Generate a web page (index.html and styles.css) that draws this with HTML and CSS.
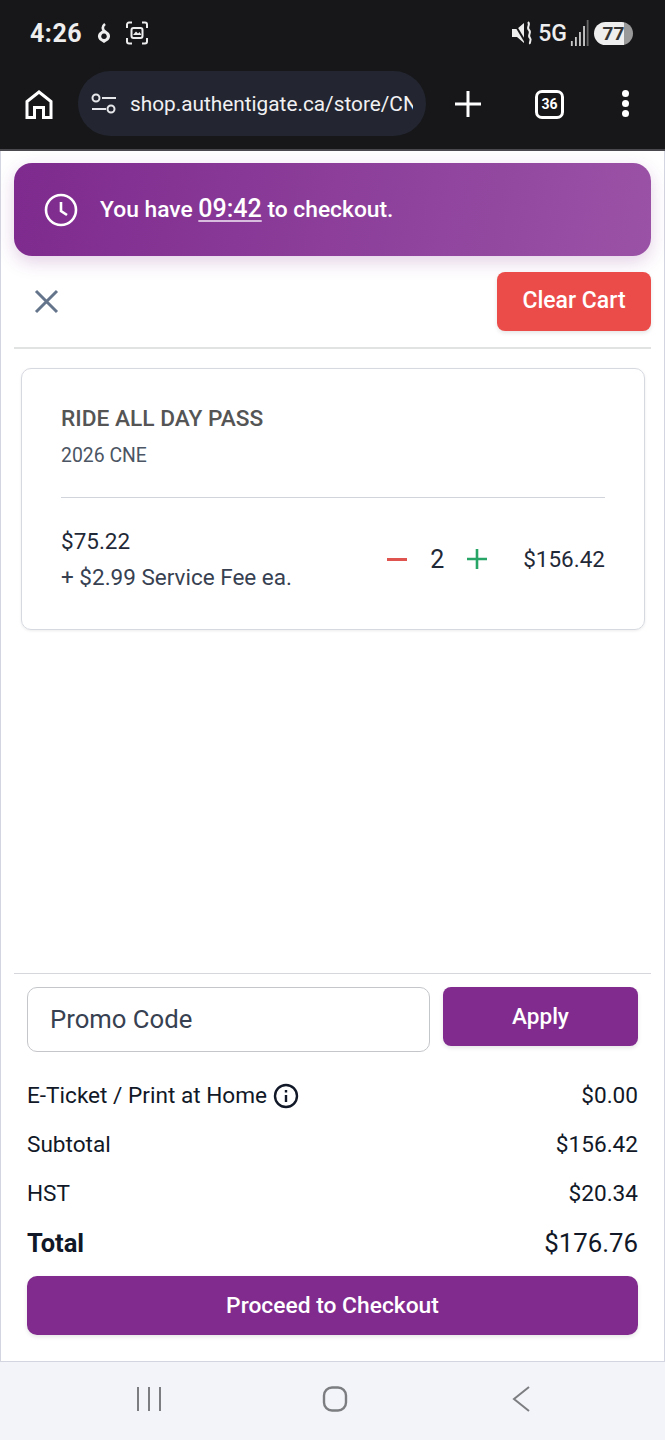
FILE: index.html
```html
<!DOCTYPE html>
<html lang="en">

<head>
    <meta charset="UTF-8" />
    <title>Cart</title>
    <meta name="viewport" content="width=device-width, initial-scale=1" />
    <link rel="stylesheet" href="styles.css">
</head>

<body>
    <div class="status-bar">
        <div class="status-left">
            <span class="clock">4:26</span>
            <svg class="ic-drop" width="14" height="20" viewBox="0 0 14 20"><path d="M8 1 C5.500 3 5 4.500 6.500 7" fill="none" stroke="#eee" stroke-width="2.600"/><path d="M7 6 L12 10 C13.500 12 13.500 15 11.500 17 L7 20 L2.500 17 C0.500 15 0.500 12 2 10Z M7 10.500 A2.800 2.800 0 1 0 7.010 10.500Z" fill="#eee" fill-rule="evenodd"/></svg>
            <svg width="24" height="24" viewBox="0 0 24 24" fill="none" stroke="#eee" stroke-width="2"><path d="M2 7V3.500A2 2 0 0 1 4 1.500H7M17 1.500H20A2 2 0 0 1 22 3.500V7M22 17V20.500A2 2 0 0 1 20 22.500H17M7 22.500H4A2 2 0 0 1 2 20.500V17"/><rect x="6.500" y="7" width="11" height="10" rx="2"/><path d="M8 14 L11 10.500 L13 12.500 L14.500 11 L16.500 14Z" fill="#eee" stroke="none"/></svg>
        </div>
        <div class="status-right">
            <svg width="24" height="26" viewBox="0 0 24 26"><path d="M1 9H6L13 3V23L6 17H1Z" fill="#eee"/><path d="M3 3 L15 23" stroke="#17171a" stroke-width="2"/><path d="M17 2 C20 5 15 7 18 10 C21 13 16 15 19 18 C21 20 18 22 19 24" fill="none" stroke="#eee" stroke-width="2"/></svg>
            <span class="net">5G</span>
            <svg width="19" height="32" viewBox="0 0 21 32" preserveAspectRatio="none"><rect x="1" y="24" width="2" height="5" fill="#ccc"/><rect x="5.500" y="20" width="2" height="9" fill="#ccc"/><rect x="10" y="15" width="2" height="14" fill="#ccc"/><rect x="14.500" y="9" width="2" height="20" fill="#ccc"/><rect x="18.500" y="3" width="2" height="26" fill="#666"/></svg>
            <span class="battery">77</span>
        </div>
    </div>

    <div class="browser-bar">
        <svg class="home-icon" width="28" height="29" viewBox="0 0 28 29" fill="none" stroke="#fff" stroke-width="3"><path d="M2 27.500V11.500L14 2L26 11.500V27.500H18.500V17.500H9.500V27.500Z"/></svg>
        <div class="address">
            <svg width="26" height="22" viewBox="0 0 26 22" fill="none" stroke="#e6e7ea" stroke-width="2"><circle cx="5" cy="5" r="3.500"/><path d="M11 5H25M1 16H15"/><circle cx="20" cy="16" r="3.500"/></svg>
            <span class="url">shop.authentigate.ca/store/CNE2026</span>
        </div>
        <svg class="plus-icon" width="26" height="26" viewBox="0 0 26 26" stroke="#fff" stroke-width="3"><path d="M13 0V26M0 13H26"/></svg>
        <span class="tabs">36</span>
        <div class="dots"><i></i><i></i><i></i></div>
    </div>

    <div class="page">
        <div class="timer">
            <svg width="34" height="34" viewBox="0 0 34 34" fill="none" stroke="#fff" stroke-width="2.600"><circle cx="17" cy="17" r="15"/><path d="M17 9V18L23 22"/></svg>
            <span class="timer-text">You have <u>09:42</u> to checkout.</span>
        </div>

        <div class="cart-head">
            <svg class="close-icon" width="25" height="25" viewBox="0 0 25 25" stroke="#64748b" stroke-width="3"><path d="M2 2L23 23M23 2L2 23"/></svg>
            <button class="btn-clear">Clear Cart</button>
        </div>

        <div class="card">
            <h3>RIDE ALL DAY PASS</h3>
            <div class="event">2026 CNE</div>
            <div class="card-line">
                <div class="prices">
                    <div class="price">$75.22</div>
                    <div class="fee">+ $2.99 Service Fee ea.</div>
                </div>
                <div class="qty">
                    <span class="minus"></span>
                    <span class="num">2</span>
                    <svg width="20" height="20" viewBox="0 0 20 20" stroke="#27a567" stroke-width="2.600"><path d="M10 0V20M0 10H20"/></svg>
                </div>
                <div class="line-total">$156.42</div>
            </div>
        </div>

        <div class="summary">
            <div class="promo">
                <input type="text" placeholder="Promo Code">
                <button class="btn-apply">Apply</button>
            </div>
            <div class="row">
                <span class="row-label">E-Ticket / Print at Home
                    <svg width="26" height="26" viewBox="0 0 26 26" fill="none" stroke="#111827" stroke-width="2.400"><circle cx="13" cy="13" r="11"/><path d="M13 12V19M13 7V9.500"/></svg>
                </span>
                <span>$0.00</span>
            </div>
            <div class="row"><span>Subtotal</span><span>$156.42</span></div>
            <div class="row"><span>HST</span><span>$20.34</span></div>
            <div class="row total"><b>Total</b><span>$176.76</span></div>
            <button class="btn-checkout">Proceed to Checkout</button>
        </div>
    </div>

    <div class="nav-bar">
        <svg width="26" height="26" viewBox="0 0 26 26" stroke="#7b7d80" stroke-width="2"><path d="M2 1V25M13 1V25M24 1V25"/></svg>
        <svg width="26" height="26" viewBox="0 0 26 26" fill="none" stroke="#7b7d80" stroke-width="2.400"><rect x="2" y="1.500" width="22" height="23" rx="8"/></svg>
        <svg class="nav-back" width="20" height="26" viewBox="0 0 20 26" fill="none" stroke="#7b7d80" stroke-width="2"><path d="M18 1L3 13L18 25"/></svg>
    </div>
</body>

</html>
```

FILE: styles.css
```css
/* base */

* {
    box-sizing: border-box;
    font-family: Roboto, "Liberation Sans", sans-serif;
}

html,
body {
    height: 1440px;
}

body {
    margin: 0;
    background: #fff;
    display: flex;
    flex-direction: column;
    overflow: hidden;
}

button {
    border: none;
    color: #fff;
    cursor: pointer;
    font-weight: 500;
}

/* phone status bar */

.status-bar {
    height: 66px;
    background: #17171a;
    display: flex;
    justify-content: space-between;
    align-items: center;
    padding: 0 32px 0 30px;
}

.status-left,
.status-right {
    display: flex;
    align-items: center;
}

.status-left {
    gap: 14px;
}

.clock {
    color: #eee;
    font-size: 25px;
    font-weight: 700;
    letter-spacing: 0.5px;
    margin-right: 1px;
}

.status-right {
    gap: 3px;
}

.net {
    color: #eee;
    font-size: 23px;
    font-weight: 500;
}

.battery {
    width: 39px;
    height: 23px;
    margin-left: 2px;
    border-radius: 12px;
    background: linear-gradient(90deg, #eee 78%, #999 78%);
    color: #333;
    font-size: 19px;
    font-weight: 700;
    line-height: 23px;
    text-align: center;
}

/* browser toolbar */

.browser-bar {
    height: 85px;
    background: #17171a;
    border-bottom: 2px solid #4a4a4e;
    display: flex;
    align-items: flex-start;
    padding: 5px 0 0 25px;
}

.home-icon {
    margin: 19px 25px 0 0;
}

.address {
    width: 348px;
    height: 65px;
    border-radius: 33px;
    background: #232630;
    display: flex;
    align-items: center;
    gap: 13px;
    padding: 0 13px 0 13px;
    margin-right: 29px;
}

.address svg {
    flex: none;
}

.url {
    color: #f1f1f3;
    font-size: 20.800px;
    white-space: nowrap;
    overflow: hidden;
}

.plus-icon {
    margin: 20px 54px 0 0;
}

.tabs {
    width: 29px;
    height: 29px;
    margin: 19px 58px 0 0;
    border: 3px solid #fff;
    border-radius: 7px;
    color: #fff;
    font-size: 14px;
    font-weight: 700;
    line-height: 23px;
    text-align: center;
}

.dots {
    display: flex;
    flex-direction: column;
    gap: 3px;
    margin-top: 19px;
}

.dots i {
    width: 7px;
    height: 7px;
    border-radius: 50%;
    background: #fff;
}

/* page */

.page {
    flex: 1;
    display: flex;
    flex-direction: column;
    padding: 12px 13px 0;
    background: #fff;
    border: 1px solid #d3d5e0;
    border-top: none;
}

.timer {
    height: 93px;
    border-radius: 18px;
    background: linear-gradient(100deg, #7e2a8e 0%, #9a52a6 100%);
    box-shadow: 0 6px 18px rgba(126, 42, 142, 0.22);
    display: flex;
    align-items: center;
    gap: 22px;
    padding-left: 30px;
    color: #fff;
    font-size: 22.800px;
    font-weight: 500;
}

.timer-text {
    margin-bottom: 2px;
}

.timer u {
    font-size: 25px;
    text-underline-offset: 3px;
    text-decoration-color: #d9bddf;
}

.cart-head {
    display: flex;
    justify-content: space-between;
    align-items: center;
    margin-top: 16px;
    padding: 0 0 16px 20px;
    border-bottom: 2px solid #e1e3e3;
}

.close-icon {
    margin-top: -1px;
}

.btn-clear {
    width: 154px;
    height: 59px;
    padding-bottom: 3px;
    border-radius: 8px;
    background: #ec4c49;
    box-shadow: 0 2px 4px rgba(0, 0, 0, 0.1);
    font-size: 23px;
}

/* cart item */

.card {
    margin: 19px 6px 0 7px;
    height: 262px;
    padding: 37px 39px 0;
    border: 1px solid #d6d9df;
    border-radius: 10px;
    box-shadow: 0 1px 3px rgba(0, 0, 0, 0.08);
}

.card h3 {
    margin: 0;
    color: #555;
    font-size: 22.700px;
    font-weight: 500;
    line-height: 26px;
}

.event {
    margin-top: 13px;
    padding-bottom: 30px;
    border-bottom: 1px solid #d1d5db;
    color: #4b5563;
    font-size: 19.400px;
    line-height: 22px;
}

.card-line {
    display: flex;
    align-items: center;
    margin-top: 25px;
}

.prices {
    flex: 1;
}

.price {
    color: #1f2937;
    font-size: 22.500px;
    line-height: 36px;
}

.fee {
    color: #374151;
    font-size: 22.500px;
    line-height: 36px;
}

.qty {
    display: flex;
    align-items: center;
    margin-right: 36px;
}

.minus {
    width: 20px;
    height: 3px;
    background: #e0544f;
}

.num {
    margin: 0 23px;
    color: #1f2937;
    font-size: 25px;
}

.line-total {
    color: #1f2937;
    font-size: 22.500px;
}

/* summary */

.summary {
    margin-top: auto;
    padding: 13px 13px 26px;
    border-top: 1px solid #d5d7dc;
}

.promo {
    display: flex;
    align-items: flex-start;
    gap: 13px;
    margin-bottom: 19px;
}

.promo input {
    width: 403px;
    height: 65px;
    padding: 0 22px 2px;
    border: 1px solid #c4c6ca;
    border-radius: 10px;
    color: #374151;
    font-size: 25.700px;
}

.promo input::placeholder {
    color: #374151;
    opacity: 1;
}

.btn-apply {
    flex: 1;
    height: 59px;
    padding-bottom: 3px;
    border-radius: 8px;
    background: #812b8e;
    box-shadow: 0 2px 4px rgba(0, 0, 0, 0.1);
    font-size: 22.500px;
}

.row {
    display: flex;
    justify-content: space-between;
    align-items: center;
    height: 49px;
    color: #111827;
    font-size: 22.600px;
}

.row-label {
    display: flex;
    align-items: center;
    gap: 6px;
}

.total {
    height: 50px;
    font-size: 25.800px;
}

.total b {
    font-size: 25.500px;
    font-weight: 700;
}

.btn-checkout {
    width: 100%;
    height: 59px;
    margin-top: 8px;
    border-radius: 10px;
    background: #812b8e;
    box-shadow: 0 2px 4px rgba(0, 0, 0, 0.1);
    font-size: 22.800px;
}

/* phone navigation */

.nav-bar {
    height: 78px;
    background: #f3f4f9;
    display: flex;
    align-items: center;
    gap: 160px;
    padding: 0 0 4px 136px;
}

.nav-back {
    margin-left: 3px;
}
```
